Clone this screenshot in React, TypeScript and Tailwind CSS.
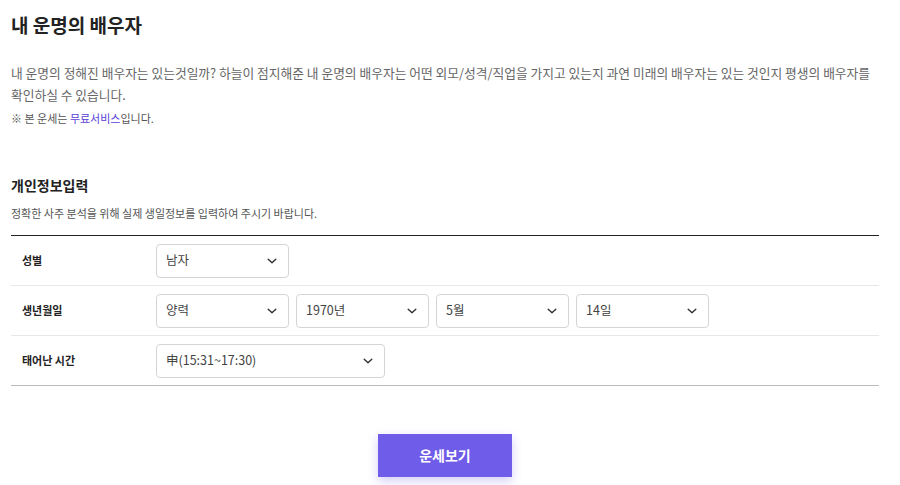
import React from "react";

const font = { fontFamily: '"Noto Sans CJK KR", "Noto Sans", sans-serif' };

function Chevron() {
  return (
    <svg width="10" height="6" viewBox="0 0 10 6" fill="none">
      <path d="M1.2 1.2l3.8 3.6 3.8-3.6" stroke="#333" strokeWidth="1.4" strokeLinecap="round" strokeLinejoin="round" />
    </svg>
  );
}

function Select({ value, w }: { value: string; w: string }) {
  return (
    <div className={`${w} h-[34px] border border-[#d5d5d5] rounded-[4px] flex items-center justify-between pl-[9px] pr-[11px] bg-white`}>
      <span className="text-[12.5px] text-[#444]">{value}</span>
      <Chevron />
    </div>
  );
}

function Row({ label, children, border }: { label: string; children: React.ReactNode; border: string }) {
  return (
    <div className={`flex items-center h-[50px] ${border}`}>
      <div className="w-[145px] pl-[11px] text-[11px] font-bold text-[#222]">{label}</div>
      <div className="flex gap-[7px]">{children}</div>
    </div>
  );
}

export default function App() {
  return (
    <div className="w-[900px] h-[485px] bg-white overflow-hidden" style={font}>
      <div className="px-[11px]">
        <h1 className="pt-[11px] text-[19px] font-bold text-[#222] leading-[28px]">내 운명의 배우자</h1>
        <p className="mt-[23px] text-[12.75px] leading-[22px] text-[#666] break-keep">
          내 운명의 정해진 배우자는 있는것일까? 하늘이 점지해준 내 운명의 배우자는 어떤 외모/성격/직업을 가지고 있는지 과연 미래의 배우자는 있는 것인지 평생의 배우자를 확인하실 수 있습니다.
        </p>
        <p className="mt-[3px] text-[11px] leading-[18px] text-[#555]">
          ※ 본 운세는 <span className="text-[#5a3fd6]">무료서비스</span>입니다.
        </p>
        <h2 className="mt-[48px] text-[14px] font-bold text-[#222] leading-[20px]">개인정보입력</h2>
        <p className="mt-[10px] text-[11px] text-[#555] leading-[16px]">정확한 사주 분석을 위해 실제 생일정보를 입력하여 주시기 바랍니다.</p>
        <div className="mt-[14px] w-[868px] border-t border-[#222]">
          <Row label="성별" border="border-b border-[#e8e8e8]">
            <Select value="남자" w="w-[133px]" />
          </Row>
          <Row label="생년월일" border="border-b border-[#e8e8e8]">
            <Select value="양력" w="w-[133px]" />
            <Select value="1970년" w="w-[133px]" />
            <Select value="5월" w="w-[133px]" />
            <Select value="14일" w="w-[133px]" />
          </Row>
          <Row label="태어난 시간" border="border-b border-[#bbbbbb]">
            <Select value="申(15:31~17:30)" w="w-[229px]" />
          </Row>
        </div>
        <div className="flex justify-center mt-[48px] w-[868px]">
          <button className="w-[134px] h-[43px] bg-[#6f5ce8] text-white text-[14px] font-bold shadow-[0_4px_10px_rgba(111,92,232,0.3)]">
            운세보기
          </button>
        </div>
      </div>
    </div>
  );
}
